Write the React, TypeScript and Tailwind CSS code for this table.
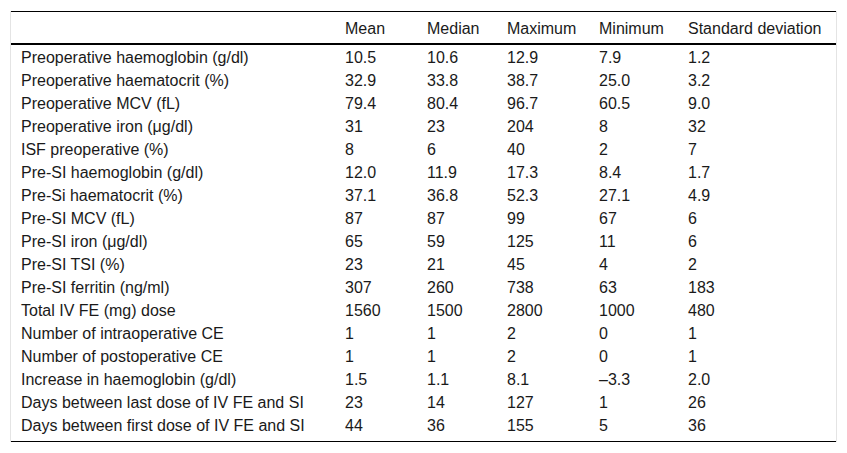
const header = ["", "Mean", "Median", "Maximum", "Minimum", "Standard deviation"];

const rows: string[][] = [
  ["Preoperative haemoglobin (g/dl)", "10.5", "10.6", "12.9", "7.9", "1.2"],
  ["Preoperative haematocrit (%)", "32.9", "33.8", "38.7", "25.0", "3.2"],
  ["Preoperative MCV (fL)", "79.4", "80.4", "96.7", "60.5", "9.0"],
  ["Preoperative iron (μg/dl)", "31", "23", "204", "8", "32"],
  ["ISF preoperative (%)", "8", "6", "40", "2", "7"],
  ["Pre-SI haemoglobin (g/dl)", "12.0", "11.9", "17.3", "8.4", "1.7"],
  ["Pre-Si haematocrit (%)", "37.1", "36.8", "52.3", "27.1", "4.9"],
  ["Pre-SI MCV (fL)", "87", "87", "99", "67", "6"],
  ["Pre-SI iron (μg/dl)", "65", "59", "125", "11", "6"],
  ["Pre-SI TSI (%)", "23", "21", "45", "4", "2"],
  ["Pre-SI ferritin (ng/ml)", "307", "260", "738", "63", "183"],
  ["Total IV FE (mg) dose", "1560", "1500", "2800", "1000", "480"],
  ["Number of intraoperative CE", "1", "1", "2", "0", "1"],
  ["Number of postoperative CE", "1", "1", "2", "0", "1"],
  ["Increase in haemoglobin (g/dl)", "1.5", "1.1", "8.1", "–3.3", "2.0"],
  ["Days between last dose of IV FE and SI", "23", "14", "127", "1", "26"],
  ["Days between first dose of IV FE and SI", "44", "36", "155", "5", "36"],
];

const cols = "grid grid-cols-[324px_82px_80px_92px_89px_1fr]";

export default function App() {
  return (
    <div className="w-[847px] h-[453px] bg-white pt-[11px] pl-[10px] font-['Liberation_Sans',Arial,sans-serif] text-[16px] text-[#1a1a1a]">
      <div className="w-[827px] border-x border-[#e4e4e4]">
        {/* header */}
        <div className={`${cols} h-[34px] items-center border-t border-b-2 border-black pt-[3px]`}>
          {header.map((h, i) => (
            <div key={i} className="pl-[10px] leading-[20px] whitespace-nowrap">
              {h}
            </div>
          ))}
        </div>

        {/* body */}
        <div className="pt-px pb-[4px] border-b border-black">
          {rows.map((r, ri) => (
            <div key={ri} className={`${cols} h-[23px] items-center`}>
              {r.map((c, ci) => (
                <div key={ci} className="pl-[10px] leading-[20px] whitespace-nowrap">
                  {c}
                </div>
              ))}
            </div>
          ))}
        </div>
      </div>
    </div>
  );
}
